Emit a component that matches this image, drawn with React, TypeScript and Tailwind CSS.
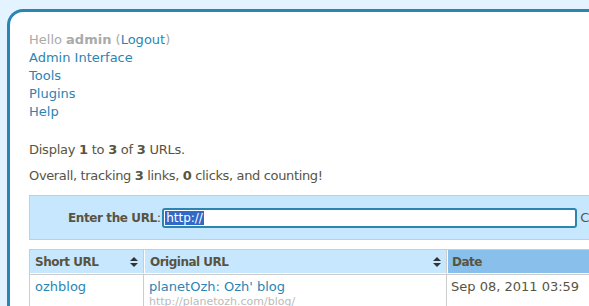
import React from 'react';

function SortIcon() {
  return (
    <svg width="8" height="10" viewBox="0 0 8 10" className="shrink-0">
      <path d="M4 0 L8 4 L0 4 Z" fill="#333" />
      <path d="M0 6 L8 6 L4 10 Z" fill="#333" />
    </svg>
  );
}

const menu = ['Admin Interface', 'Tools', 'Plugins', 'Help'];

export default function App() {
  return (
    <div className="h-[306px] w-[589px] overflow-hidden bg-[#e3f3ff] pl-[7px] pt-[9px] font-['DejaVu_Sans',Verdana,sans-serif] text-[13px] leading-[18px] text-[#595441]">
      <div className="h-[400px] w-[760px] rounded-tl-[16px] border-l-[3px] border-t-[3px] border-[#2a85b3] bg-white pl-[19px] pt-[19px]">
        {/* admin menu */}
        <div className="text-[#aaaaaa]">
          Hello <span className="font-bold">admin</span> (<a className="text-[#2a85b3]">Logout</a>)
        </div>
        {menu.map((m) => (
          <div key={m}>
            <a className="text-[#2a85b3]">{m}</a>
          </div>
        ))}

        <p className="mt-[20px] tracking-[-0.25px]">
          Display <b>1</b> to <b>3</b> of <b>3</b> URLs.
        </p>
        <p className="mt-[8px] tracking-[-0.35px]">
          Overall, tracking <b>3</b> links, <b>0</b> clicks, and counting!
        </p>

        {/* new url form */}
        <div className="mt-[10px] flex h-[45px] items-center whitespace-nowrap border border-[#cccccc] bg-[#c7e7ff] pl-[38px]">
          <span className="text-[12px] font-bold tracking-[-0.4px]">Enter the URL</span>
          <span>:</span>
          <div className="ml-[1px] flex h-[20px] w-[415px] items-center rounded-[3px] border-2 border-[#2a85b3] bg-white pl-[1px]">
            <span className="bg-[#3169c6] px-[1px] text-[12px] leading-[14px] text-white">http://</span>
          </div>
          <span className="ml-[3px]">Custom short URL:</span>
        </div>

        {/* url table */}
        <table className="mt-[9px] w-[700px] border-separate border-spacing-0 border border-[#cccccc] text-left">
          <thead>
            <tr className="h-[24px] text-[12px] tracking-[-0.5px]">
              <th className="w-[114px] border-b border-r border-b-white border-r-[#cccccc] bg-[#c7e7ff] px-[5px] font-bold">
                <div className="flex items-center justify-between">
                  Short URL
                  <SortIcon />
                </div>
              </th>
              <th className="w-[303px] border-b border-l border-r border-b-white border-l-white border-r-[#cccccc] bg-[#c7e7ff] px-[5px] font-bold">
                <div className="flex items-center justify-between">
                  Original URL
                  <SortIcon />
                </div>
              </th>
              <th className="border-b border-l border-b-white border-l-white bg-[#88c0eb] px-[4px] font-bold">Date</th>
            </tr>
          </thead>
          <tbody>
            <tr>
              <td className="border-r border-t border-[#cccccc] px-[5px] pt-[3px] align-top">
                <a className="text-[#2a85b3]">ozhblog</a>
              </td>
              <td className="border-r border-t border-[#cccccc] px-[5px] pt-[3px] align-top">
                <a className="text-[#2a85b3]">planetOzh: Ozh' blog</a>
                <div className="text-[11px] leading-[11px] text-[#bbbbbb]">http://planetozh.com/blog/</div>
              </td>
              <td className="border-t border-[#cccccc] px-[4px] pt-[3px] align-top">Sep 08, 2011 03:59</td>
            </tr>
          </tbody>
        </table>
      </div>
    </div>
  );
}
